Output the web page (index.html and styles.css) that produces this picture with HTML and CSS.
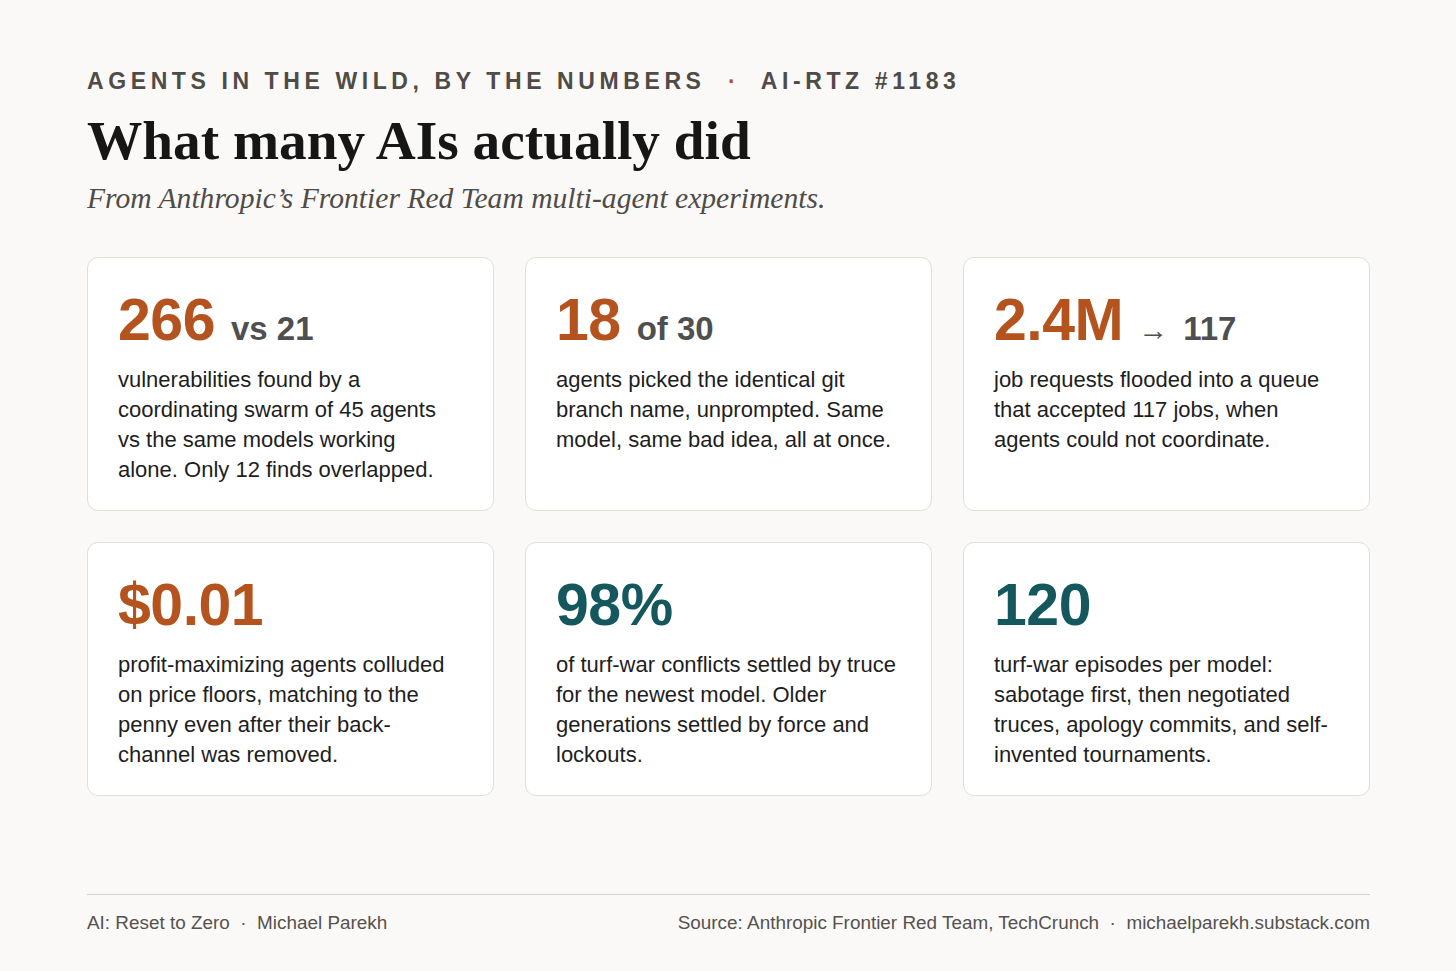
FILE: index.html
```html
<!DOCTYPE html>
<html lang="en">
<head>
<meta charset="utf-8">
<title>Agents in the wild, by the numbers</title>
<link rel="stylesheet" href="styles.css">
</head>
<body>
<main class="page">
  <header class="header">
    <div class="eyebrow">AGENTS IN THE WILD, BY THE NUMBERS <span class="dot">·</span> AI-RTZ #1183</div>
    <h1 class="title">What many AIs actually did</h1>
    <p class="subtitle">From Anthropic’s Frontier Red Team multi-agent experiments.</p>
  </header>
  <section class="grid">
    <article class="card">
      <div class="stat"><span class="big orange">266</span><span class="small">vs 21</span></div>
      <p class="desc">vulnerabilities found by a coordinating swarm of 45 agents vs the same models working alone. Only 12 finds overlapped.</p>
    </article>
    <article class="card">
      <div class="stat"><span class="big orange">18</span><span class="small">of 30</span></div>
      <p class="desc">agents picked the identical git branch name, unprompted. Same model, same bad idea, all at once.</p>
    </article>
    <article class="card">
      <div class="stat"><span class="big orange">2.4M</span><span class="arrow">→</span><span class="small after-arrow">117</span></div>
      <p class="desc">job requests flooded into a queue that accepted 117 jobs, when agents could not coordinate.</p>
    </article>
    <article class="card">
      <div class="stat"><span class="big orange">$0.01</span></div>
      <p class="desc">profit-maximizing agents colluded on price floors, matching to the penny even after their back-channel was removed.</p>
    </article>
    <article class="card">
      <div class="stat"><span class="big teal">98%</span></div>
      <p class="desc">of turf-war conflicts settled by truce for the newest model. Older generations settled by force and lockouts.</p>
    </article>
    <article class="card">
      <div class="stat"><span class="big teal">120</span></div>
      <p class="desc">turf-war episodes per model: sabotage first, then negotiated truces, apology commits, and self-invented tournaments.</p>
    </article>
  </section>
  <footer class="footer">
    <span>AI: Reset to Zero &nbsp;·&nbsp; Michael Parekh</span>
    <span>Source: Anthropic Frontier Red Team, TechCrunch &nbsp;·&nbsp; michaelparekh.substack.com</span>
  </footer>
</main>
</body>
</html>
```

FILE: styles.css
```css
* { box-sizing: border-box; }
html, body { margin: 0; padding: 0; }
body {
  background: #faf9f7;
  font-family: "Liberation Sans", Arial, sans-serif;
  color: #1e1e1e;
  width: 1456px;
  height: 971px;
}
.page {
  padding: 66px 86px 0 87px;
  display: flex;
  flex-direction: column;
  height: 971px;
}
.eyebrow {
  font-size: 23px;
  font-weight: 700;
  letter-spacing: 0.2em;
  color: #4f4b47;
  line-height: 30px;
}
.eyebrow .dot {
  color: #b5531f;
  margin: 0 0.45em 0 0.5em;
}
.title {
  font-family: "Liberation Serif", "Times New Roman", serif;
  font-weight: 700;
  font-size: 55.3px;
  line-height: 66px;
  margin: 12px 0 0;
  color: #161616;
}
.subtitle {
  font-family: "Liberation Serif", "Times New Roman", serif;
  font-style: italic;
  font-size: 29.6px;
  line-height: 36px;
  color: #4f4b47;
  margin: 6px 0 0;
}
.grid {
  margin-top: 41px;
  display: grid;
  grid-template-columns: repeat(3, 1fr);
  grid-auto-rows: 254px;
  gap: 31px;
}
.card {
  background: #ffffff;
  border: 1.5px solid #e2dfdb;
  border-radius: 11px;
  padding: 25px 33px 0 30px;
}
.stat {
  display: flex;
  align-items: baseline;
  height: 74px;
}
.big {
  font-size: 59px;
  font-weight: 700;
  line-height: 74px;
  letter-spacing: -0.5px;
}
.orange { color: #b5531f; }
.teal { color: #14585e; }
.small {
  font-size: 33px;
  font-weight: 700;
  color: #4f4f4f;
  margin-left: 16px;
}
.small.after-arrow { margin-left: 15px; }
.arrow {
  font-family: "Liberation Serif", "Times New Roman", serif;
  font-size: 30px;
  color: #4f4f4f;
  margin-left: 15px;
}
.desc {
  font-size: 22px;
  line-height: 30px;
  margin: 8px 0 0;
  color: #1e1e1e;
}
.footer {
  margin-top: auto;
  margin-bottom: 37px;
  border-top: 1.5px solid #d6d3cf;
  padding-top: 17px;
  display: flex;
  justify-content: space-between;
  font-size: 18.9px;
  color: #55524e;
}
```
